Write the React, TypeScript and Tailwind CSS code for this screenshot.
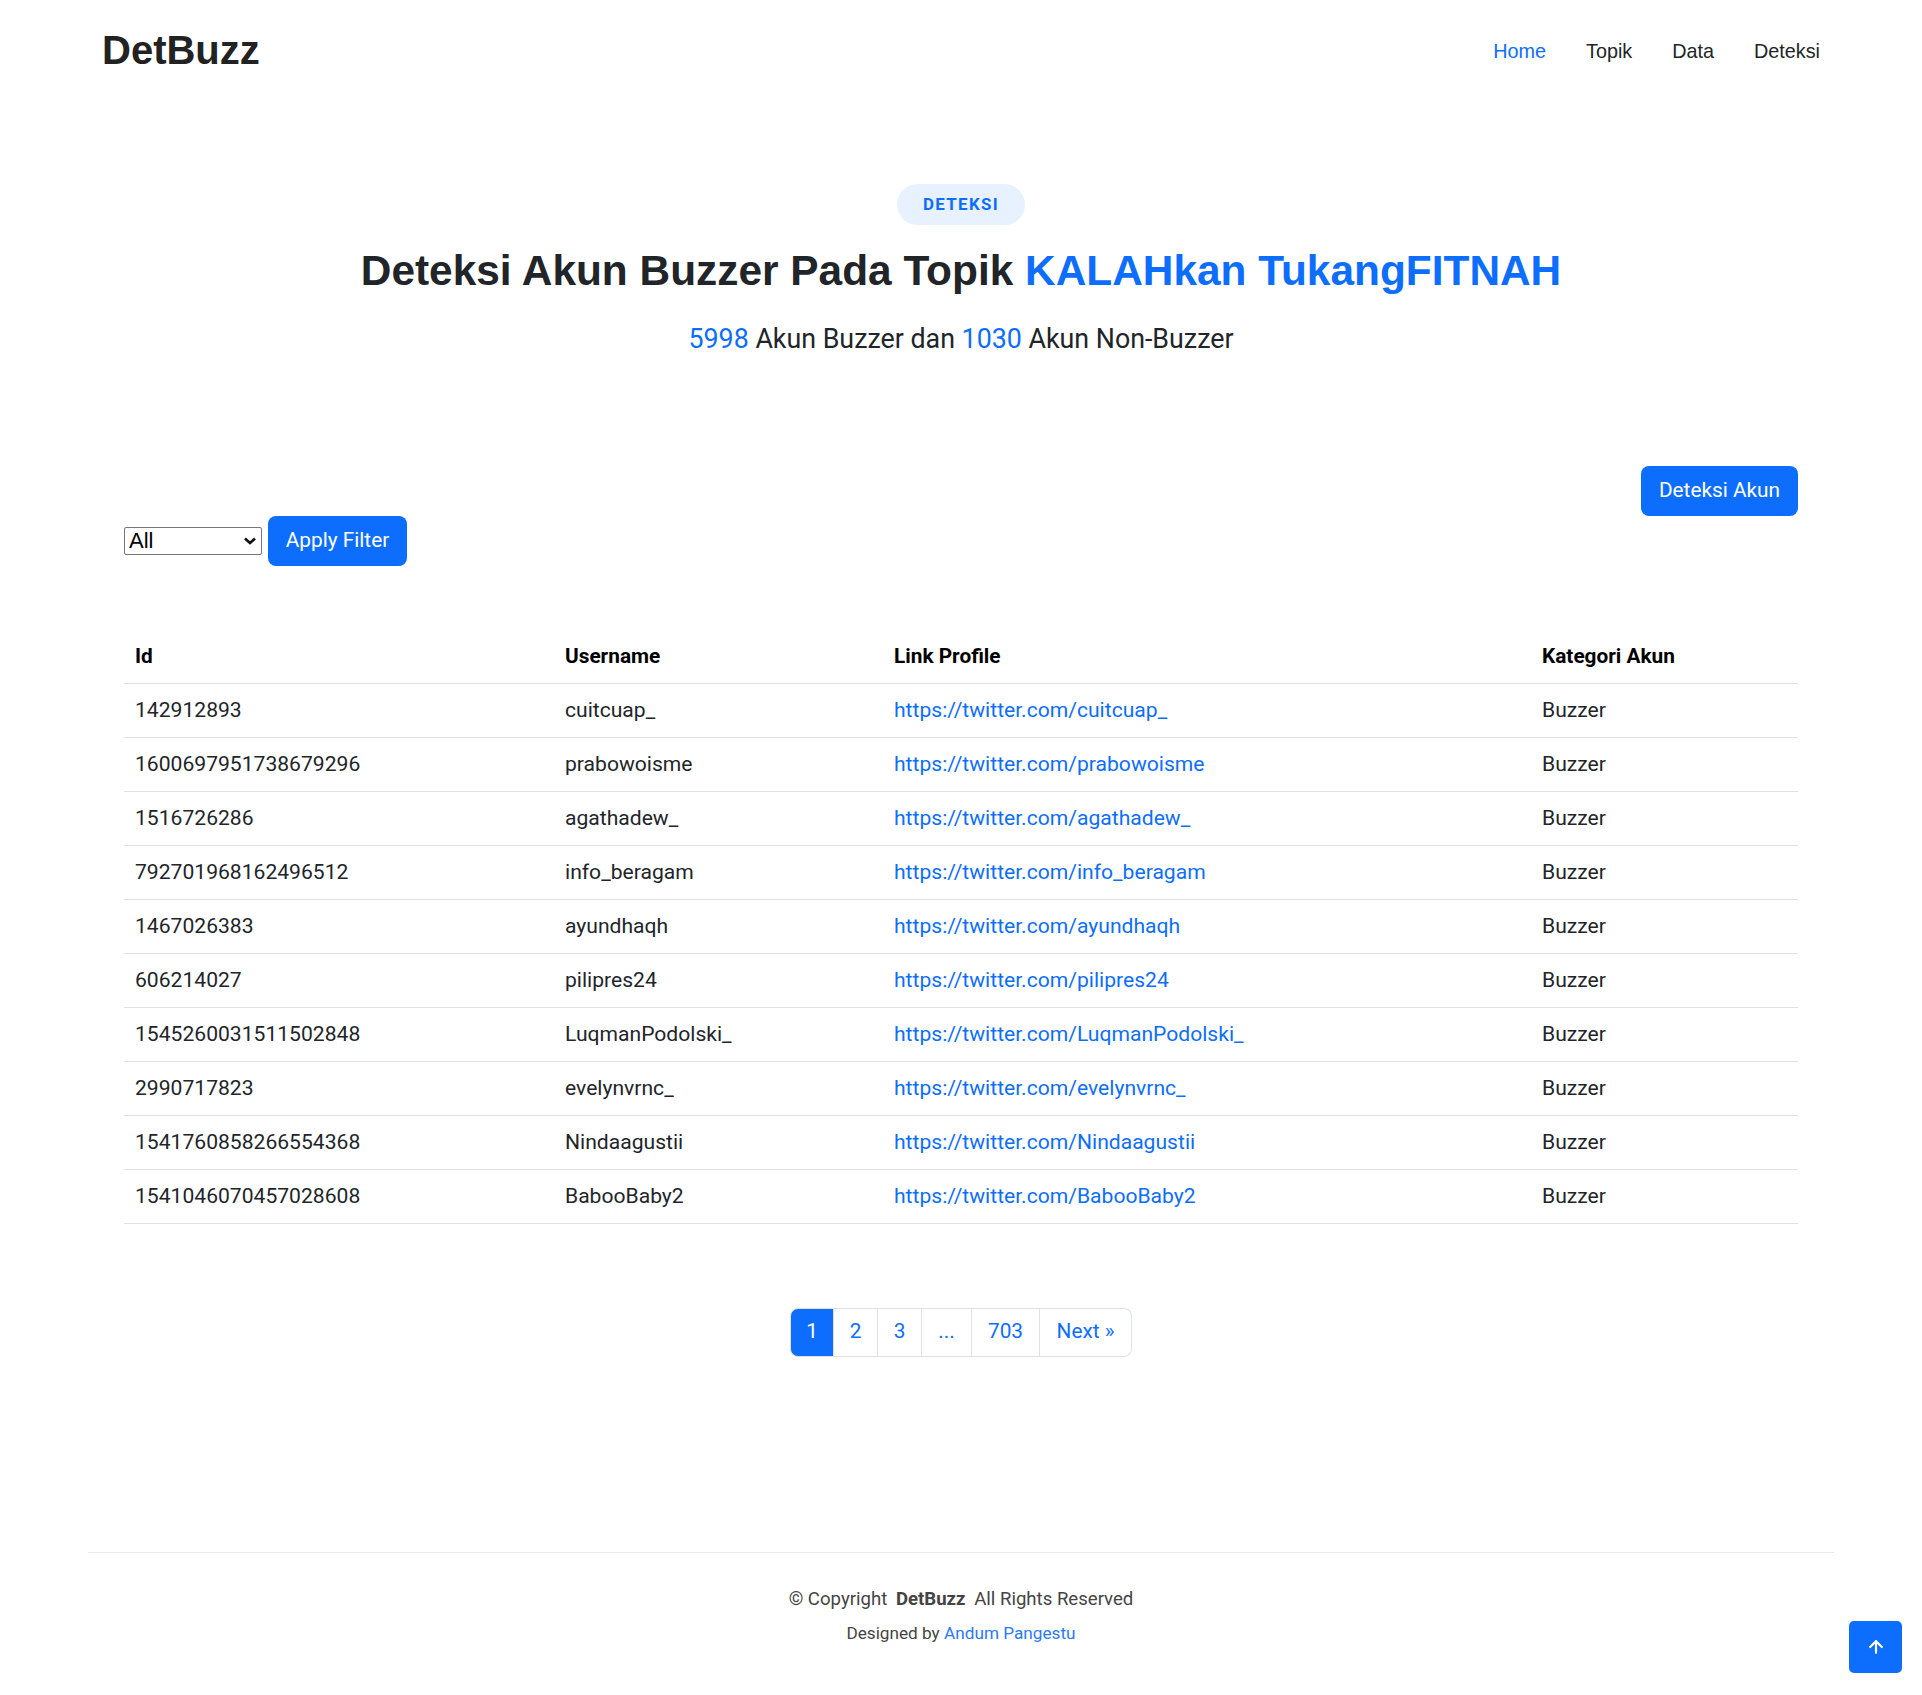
import { ArrowUp } from "lucide-react";

const accounts = [
  { id: "142912893", username: "cuitcuap_" },
  { id: "1600697951738679296", username: "prabowoisme" },
  { id: "1516726286", username: "agathadew_" },
  { id: "792701968162496512", username: "info_beragam" },
  { id: "1467026383", username: "ayundhaqh" },
  { id: "606214027", username: "pilipres24" },
  { id: "1545260031511502848", username: "LuqmanPodolski_" },
  { id: "2990717823", username: "evelynvrnc_" },
  { id: "1541760858266554368", username: "Nindaagustii" },
  { id: "1541046070457028608", username: "BabooBaby2" },
];

const pages = [
  { label: "1", width: "w-[44px]", active: true },
  { label: "2", width: "w-[44px]" },
  { label: "3", width: "w-[44px]" },
  { label: "...", width: "w-[50px]" },
  { label: "703", width: "w-[68px]" },
  { label: "Next »", width: "w-[92px]" },
];

export default function App() {
  return (
    <div className="min-h-screen bg-white font-['Roboto',sans-serif] text-[#212529]">
      {/* Header */}
      <header className="h-[100px] px-[102px] flex items-center justify-between">
        <h1 className="font-['Liberation_Sans',Arial,sans-serif] text-[40px] font-bold text-[#222222] leading-none">
          DetBuzz
        </h1>
        <nav className="flex items-center gap-[40px] pt-[4px] font-['Liberation_Sans',Arial,sans-serif] text-[19.8px]">
          <a className="text-[#0d6efd]">Home</a>
          <a className="text-[#212529]">Topik</a>
          <a className="text-[#212529]">Data</a>
          <a className="text-[#212529]">Deteksi</a>
        </nav>
      </header>

      {/* Judul */}
      <section className="pt-[84px] flex flex-col items-center">
        <span className="h-[41px] px-[26px] flex items-center rounded-full bg-[#e7f1ff] text-[#0d6efd] text-[16.9px] font-bold tracking-[1.3px]">
          DETEKSI
        </span>
        <h2 className="mt-[21px] font-['Liberation_Sans',Arial,sans-serif] text-[42.4px] leading-[50px] font-bold text-[#212529]">
          Deteksi Akun Buzzer Pada Topik{" "}
          <span className="text-[#0d6efd]">KALAHkan TukangFITNAH</span>
        </h2>
        <p className="mt-[24px] text-[26.8px] leading-[39px] text-[#212529]">
          <span className="text-[#0d6efd]">5998</span> Akun Buzzer dan{" "}
          <span className="text-[#0d6efd]">1030</span> Akun Non-Buzzer
        </p>
      </section>

      {/* Tabel */}
      <section className="px-[124px] mt-[107px]">
        <div className="flex justify-end">
          <button className="h-[50px] px-[18px] rounded-[8px] bg-[#0d6efd] text-white text-[20.8px]">
            Deteksi Akun
          </button>
        </div>

        <div className="flex items-center gap-[6px]">
          <div className="relative w-[138px] h-[28px]">
            <select className="appearance-none w-full h-full border border-[#767676] rounded-[2px] bg-white pl-[4px] font-['Liberation_Sans',Arial,sans-serif] text-[22px] text-black leading-none">
              <option>All</option>
              <option>Buzzer</option>
              <option>Non-Buzzer</option>
            </select>
            <svg
              className="absolute right-[5px] top-[9px] pointer-events-none"
              width="14"
              height="10"
              viewBox="0 0 14 10"
            >
              <polyline points="2,2.5 7,7 12,2.5" fill="none" stroke="#111" strokeWidth="2.6" />
            </svg>
          </div>
          <button className="h-[50px] w-[139px] rounded-[8px] bg-[#0d6efd] text-white text-[20.8px]">
            Apply Filter
          </button>
        </div>

        <table className="mt-[64px] w-full table-fixed border-collapse text-[21.1px]">
          <thead>
            <tr className="border-b border-[#dee2e6] text-[20.8px]">
              <th className="w-[430px] px-[11px] h-[53px] text-left font-bold text-black">Id</th>
              <th className="w-[329px] px-[11px] h-[53px] text-left font-bold text-black">Username</th>
              <th className="w-[648px] px-[11px] h-[53px] text-left font-bold text-black">Link Profile</th>
              <th className="px-[11px] h-[53px] text-left font-bold text-black">Kategori Akun</th>
            </tr>
          </thead>
          <tbody>
            {accounts.map((acc) => (
              <tr key={acc.id} className="border-b border-[#dee2e6]">
                <td className="px-[11px] py-[10.5px] leading-[32px]">{acc.id}</td>
                <td className="px-[11px] py-[10.5px] leading-[32px]">{acc.username}</td>
                <td className="px-[11px] py-[10.5px] leading-[32px]">
                  <a className="text-[#0d6efd]">https://twitter.com/{acc.username}</a>
                </td>
                <td className="px-[11px] py-[10.5px] leading-[32px]">Buzzer</td>
              </tr>
            ))}
          </tbody>
        </table>

        {/* Paginasi */}
        <div className="mt-[84px] flex justify-center">
          <ul className="flex h-[49px] text-[20.8px]">
            {pages.map((p, i) => (
              <li
                key={p.label}
                className={`${p.width} flex items-center justify-center border-y border-r border-[#dee2e6] ${
                  i === 0 ? "border-l rounded-l-[8px]" : ""
                } ${i === pages.length - 1 ? "rounded-r-[8px]" : ""} ${
                  p.active ? "bg-[#0d6efd] border-[#0d6efd] text-white" : "bg-white text-[#0d6efd]"
                }`}
              >
                {p.label}
              </li>
            ))}
          </ul>
        </div>
      </section>

      {/* Footer */}
      <footer className="mt-[195px] mx-[88px] border-t border-[#e9e9e9] pt-[33px] pb-[40px] flex flex-col items-center text-[#444444]">
        <p className="text-[18.6px] leading-[27px]">
          © Copyright <strong className="font-bold px-[4px]">DetBuzz</strong> All Rights Reserved
        </p>
        <p className="mt-[8px] text-[17.2px] leading-[25px]">
          Designed by <a className="text-[#2b7af5]">Andum Pangestu</a>
        </p>
      </footer>

      <a className="fixed right-[20px] bottom-[22px] w-[53px] h-[52px] rounded-[5px] bg-[#0d6efd] flex items-center justify-center">
        <ArrowUp size={20} strokeWidth={2.6} color="white" />
      </a>
    </div>
  );
}
